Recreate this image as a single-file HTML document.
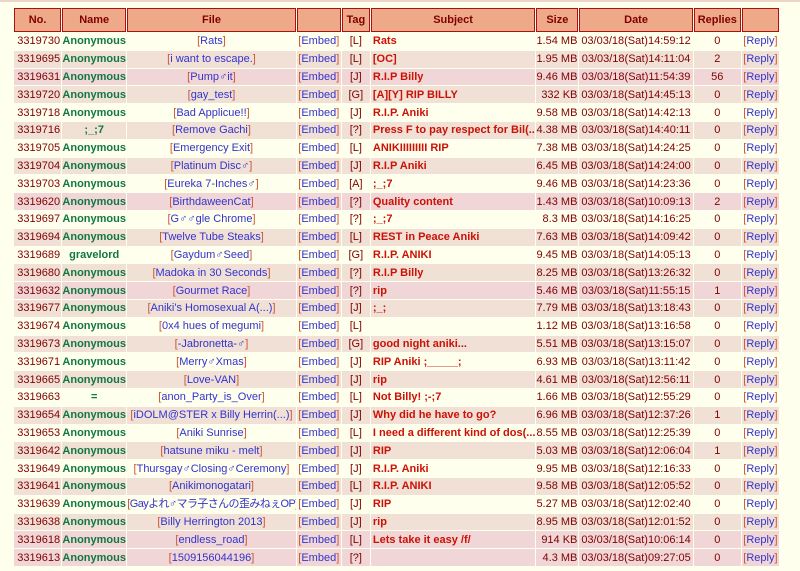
<!DOCTYPE html>
<html><head><meta charset="utf-8">
<style>
html,body{margin:0;padding:0;background:#FFFFEE;}
body{width:800px;height:571px;overflow:hidden;position:relative;font-family:"Liberation Sans","Noto Sans CJK JP",Arial,sans-serif;font-size:11px;}
.top{position:absolute;left:0;top:0;width:800px;height:2px;background:#EAD6C6;}
table{position:absolute;left:13px;top:7px;border-collapse:separate;border-spacing:1px;table-layout:fixed;width:767px;}
th{background:#EEAA88;border:1px solid #AA1111;color:#800000;font-weight:bold;height:22px;padding:0;font-size:11px;}
td{height:16.8px;padding:0;white-space:nowrap;overflow:hidden;color:#800000;line-height:16px;font-size:11px;}
tr.a td{background:#FFFFEE}
tr.b td{background:#F0E0D6}
tr.p td{background:#F0D6D6}
td.no{text-align:right;padding-right:1px}
td.nm{color:#117743;font-weight:bold;text-align:center}
td.f,td.e,td.t,td.r,td.rp{text-align:center}
td.s{color:#CC1105;font-weight:bold;text-align:left;padding-left:2px}
td.sz{text-align:right;padding-right:1px}
td.d{text-align:center}
a{color:#3333CC;text-decoration:none}
.br{color:#CC5533}
</style></head><body>
<div class="top"></div>
<table>
<colgroup><col style="width:47px"><col style="width:64px"><col style="width:168px"><col style="width:44px"><col style="width:28px"><col style="width:164px"><col style="width:42px"><col style="width:113px"><col style="width:47px"><col style="width:37px"></colgroup>
<tr><th>No.</th><th>Name</th><th>File</th><th></th><th>Tag</th><th>Subject</th><th>Size</th><th>Date</th><th>Replies</th><th></th></tr>
<tr class="a"><td class="no">3319730</td><td class="nm">Anonymous</td><td class="f"><span class="br">[</span><a>Rats</a><span class="br">]</span></td><td class="e"><span class="br">[</span><a>Embed</a><span class="br">]</span></td><td class="t">[L]</td><td class="s">Rats</td><td class="sz">1.54 MB</td><td class="d">03/03/18(Sat)14:59:12</td><td class="r">0</td><td class="rp"><span class="br">[</span><a>Reply</a><span class="br">]</span></td></tr>
<tr class="b"><td class="no">3319695</td><td class="nm">Anonymous</td><td class="f"><span class="br">[</span><a>i want to escape.</a><span class="br">]</span></td><td class="e"><span class="br">[</span><a>Embed</a><span class="br">]</span></td><td class="t">[L]</td><td class="s">[OC]</td><td class="sz">1.95 MB</td><td class="d">03/03/18(Sat)14:11:04</td><td class="r">2</td><td class="rp"><span class="br">[</span><a>Reply</a><span class="br">]</span></td></tr>
<tr class="p"><td class="no">3319631</td><td class="nm">Anonymous</td><td class="f"><span class="br">[</span><a>Pump♂it</a><span class="br">]</span></td><td class="e"><span class="br">[</span><a>Embed</a><span class="br">]</span></td><td class="t">[J]</td><td class="s">R.I.P Billy</td><td class="sz">9.46 MB</td><td class="d">03/03/18(Sat)11:54:39</td><td class="r">56</td><td class="rp"><span class="br">[</span><a>Reply</a><span class="br">]</span></td></tr>
<tr class="b"><td class="no">3319720</td><td class="nm">Anonymous</td><td class="f"><span class="br">[</span><a>gay_test</a><span class="br">]</span></td><td class="e"><span class="br">[</span><a>Embed</a><span class="br">]</span></td><td class="t">[G]</td><td class="s">[A][Y] RIP BILLY</td><td class="sz">332 KB</td><td class="d">03/03/18(Sat)14:45:13</td><td class="r">0</td><td class="rp"><span class="br">[</span><a>Reply</a><span class="br">]</span></td></tr>
<tr class="a"><td class="no">3319718</td><td class="nm">Anonymous</td><td class="f"><span class="br">[</span><a>Bad Applicue!!</a><span class="br">]</span></td><td class="e"><span class="br">[</span><a>Embed</a><span class="br">]</span></td><td class="t">[J]</td><td class="s">R.I.P. Aniki</td><td class="sz">9.58 MB</td><td class="d">03/03/18(Sat)14:42:13</td><td class="r">0</td><td class="rp"><span class="br">[</span><a>Reply</a><span class="br">]</span></td></tr>
<tr class="b"><td class="no">3319716</td><td class="nm">;_;7</td><td class="f"><span class="br">[</span><a>Remove Gachi</a><span class="br">]</span></td><td class="e"><span class="br">[</span><a>Embed</a><span class="br">]</span></td><td class="t">[?]</td><td class="s">Press F to pay respect for Bil(...)</td><td class="sz">4.38 MB</td><td class="d">03/03/18(Sat)14:40:11</td><td class="r">0</td><td class="rp"><span class="br">[</span><a>Reply</a><span class="br">]</span></td></tr>
<tr class="a"><td class="no">3319705</td><td class="nm">Anonymous</td><td class="f"><span class="br">[</span><a>Emergency Exit</a><span class="br">]</span></td><td class="e"><span class="br">[</span><a>Embed</a><span class="br">]</span></td><td class="t">[L]</td><td class="s">ANIKIIIIIIIII RIP</td><td class="sz">7.38 MB</td><td class="d">03/03/18(Sat)14:24:25</td><td class="r">0</td><td class="rp"><span class="br">[</span><a>Reply</a><span class="br">]</span></td></tr>
<tr class="b"><td class="no">3319704</td><td class="nm">Anonymous</td><td class="f"><span class="br">[</span><a>Platinum Disc♂</a><span class="br">]</span></td><td class="e"><span class="br">[</span><a>Embed</a><span class="br">]</span></td><td class="t">[J]</td><td class="s">R.I.P Aniki</td><td class="sz">6.45 MB</td><td class="d">03/03/18(Sat)14:24:00</td><td class="r">0</td><td class="rp"><span class="br">[</span><a>Reply</a><span class="br">]</span></td></tr>
<tr class="a"><td class="no">3319703</td><td class="nm">Anonymous</td><td class="f"><span class="br">[</span><a>Eureka 7-Inches♂</a><span class="br">]</span></td><td class="e"><span class="br">[</span><a>Embed</a><span class="br">]</span></td><td class="t">[A]</td><td class="s">;_;7</td><td class="sz">9.46 MB</td><td class="d">03/03/18(Sat)14:23:36</td><td class="r">0</td><td class="rp"><span class="br">[</span><a>Reply</a><span class="br">]</span></td></tr>
<tr class="p"><td class="no">3319620</td><td class="nm">Anonymous</td><td class="f"><span class="br">[</span><a>BirthdaweenCat</a><span class="br">]</span></td><td class="e"><span class="br">[</span><a>Embed</a><span class="br">]</span></td><td class="t">[?]</td><td class="s">Quality content</td><td class="sz">1.43 MB</td><td class="d">03/03/18(Sat)10:09:13</td><td class="r">2</td><td class="rp"><span class="br">[</span><a>Reply</a><span class="br">]</span></td></tr>
<tr class="a"><td class="no">3319697</td><td class="nm">Anonymous</td><td class="f"><span class="br">[</span><a>G♂♂gle Chrome</a><span class="br">]</span></td><td class="e"><span class="br">[</span><a>Embed</a><span class="br">]</span></td><td class="t">[?]</td><td class="s">;_;7</td><td class="sz">8.3 MB</td><td class="d">03/03/18(Sat)14:16:25</td><td class="r">0</td><td class="rp"><span class="br">[</span><a>Reply</a><span class="br">]</span></td></tr>
<tr class="b"><td class="no">3319694</td><td class="nm">Anonymous</td><td class="f"><span class="br">[</span><a>Twelve Tube Steaks</a><span class="br">]</span></td><td class="e"><span class="br">[</span><a>Embed</a><span class="br">]</span></td><td class="t">[L]</td><td class="s">REST in Peace Aniki</td><td class="sz">7.63 MB</td><td class="d">03/03/18(Sat)14:09:42</td><td class="r">0</td><td class="rp"><span class="br">[</span><a>Reply</a><span class="br">]</span></td></tr>
<tr class="a"><td class="no">3319689</td><td class="nm">gravelord</td><td class="f"><span class="br">[</span><a>Gaydum♂Seed</a><span class="br">]</span></td><td class="e"><span class="br">[</span><a>Embed</a><span class="br">]</span></td><td class="t">[G]</td><td class="s">R.I.P. ANIKI</td><td class="sz">9.45 MB</td><td class="d">03/03/18(Sat)14:05:13</td><td class="r">0</td><td class="rp"><span class="br">[</span><a>Reply</a><span class="br">]</span></td></tr>
<tr class="b"><td class="no">3319680</td><td class="nm">Anonymous</td><td class="f"><span class="br">[</span><a>Madoka in 30 Seconds</a><span class="br">]</span></td><td class="e"><span class="br">[</span><a>Embed</a><span class="br">]</span></td><td class="t">[?]</td><td class="s">R.I.P Billy</td><td class="sz">8.25 MB</td><td class="d">03/03/18(Sat)13:26:32</td><td class="r">0</td><td class="rp"><span class="br">[</span><a>Reply</a><span class="br">]</span></td></tr>
<tr class="p"><td class="no">3319632</td><td class="nm">Anonymous</td><td class="f"><span class="br">[</span><a>Gourmet Race</a><span class="br">]</span></td><td class="e"><span class="br">[</span><a>Embed</a><span class="br">]</span></td><td class="t">[?]</td><td class="s">rip</td><td class="sz">5.46 MB</td><td class="d">03/03/18(Sat)11:55:15</td><td class="r">1</td><td class="rp"><span class="br">[</span><a>Reply</a><span class="br">]</span></td></tr>
<tr class="b"><td class="no">3319677</td><td class="nm">Anonymous</td><td class="f"><span class="br">[</span><a>Aniki's Homosexual A(...)</a><span class="br">]</span></td><td class="e"><span class="br">[</span><a>Embed</a><span class="br">]</span></td><td class="t">[J]</td><td class="s">;_;</td><td class="sz">7.79 MB</td><td class="d">03/03/18(Sat)13:18:43</td><td class="r">0</td><td class="rp"><span class="br">[</span><a>Reply</a><span class="br">]</span></td></tr>
<tr class="a"><td class="no">3319674</td><td class="nm">Anonymous</td><td class="f"><span class="br">[</span><a>0x4 hues of megumi</a><span class="br">]</span></td><td class="e"><span class="br">[</span><a>Embed</a><span class="br">]</span></td><td class="t">[L]</td><td class="s"></td><td class="sz">1.12 MB</td><td class="d">03/03/18(Sat)13:16:58</td><td class="r">0</td><td class="rp"><span class="br">[</span><a>Reply</a><span class="br">]</span></td></tr>
<tr class="b"><td class="no">3319673</td><td class="nm">Anonymous</td><td class="f"><span class="br">[</span><a>-Jabronetta-♂</a><span class="br">]</span></td><td class="e"><span class="br">[</span><a>Embed</a><span class="br">]</span></td><td class="t">[G]</td><td class="s">good night aniki...</td><td class="sz">5.51 MB</td><td class="d">03/03/18(Sat)13:15:07</td><td class="r">0</td><td class="rp"><span class="br">[</span><a>Reply</a><span class="br">]</span></td></tr>
<tr class="a"><td class="no">3319671</td><td class="nm">Anonymous</td><td class="f"><span class="br">[</span><a>Merry♂Xmas</a><span class="br">]</span></td><td class="e"><span class="br">[</span><a>Embed</a><span class="br">]</span></td><td class="t">[J]</td><td class="s">RIP Aniki ;_____;</td><td class="sz">6.93 MB</td><td class="d">03/03/18(Sat)13:11:42</td><td class="r">0</td><td class="rp"><span class="br">[</span><a>Reply</a><span class="br">]</span></td></tr>
<tr class="b"><td class="no">3319665</td><td class="nm">Anonymous</td><td class="f"><span class="br">[</span><a>Love-VAN</a><span class="br">]</span></td><td class="e"><span class="br">[</span><a>Embed</a><span class="br">]</span></td><td class="t">[J]</td><td class="s">rip</td><td class="sz">4.61 MB</td><td class="d">03/03/18(Sat)12:56:11</td><td class="r">0</td><td class="rp"><span class="br">[</span><a>Reply</a><span class="br">]</span></td></tr>
<tr class="a"><td class="no">3319663</td><td class="nm">=</td><td class="f"><span class="br">[</span><a>anon_Party_is_Over</a><span class="br">]</span></td><td class="e"><span class="br">[</span><a>Embed</a><span class="br">]</span></td><td class="t">[L]</td><td class="s">Not Billy! ;-;7</td><td class="sz">1.66 MB</td><td class="d">03/03/18(Sat)12:55:29</td><td class="r">0</td><td class="rp"><span class="br">[</span><a>Reply</a><span class="br">]</span></td></tr>
<tr class="b"><td class="no">3319654</td><td class="nm">Anonymous</td><td class="f"><span class="br">[</span><a>iDOLM@STER x Billy Herrin(...)</a><span class="br">]</span></td><td class="e"><span class="br">[</span><a>Embed</a><span class="br">]</span></td><td class="t">[J]</td><td class="s">Why did he have to go?</td><td class="sz">6.96 MB</td><td class="d">03/03/18(Sat)12:37:26</td><td class="r">1</td><td class="rp"><span class="br">[</span><a>Reply</a><span class="br">]</span></td></tr>
<tr class="a"><td class="no">3319653</td><td class="nm">Anonymous</td><td class="f"><span class="br">[</span><a>Aniki Sunrise</a><span class="br">]</span></td><td class="e"><span class="br">[</span><a>Embed</a><span class="br">]</span></td><td class="t">[L]</td><td class="s">I need a different kind of dos(...)</td><td class="sz">8.55 MB</td><td class="d">03/03/18(Sat)12:25:39</td><td class="r">0</td><td class="rp"><span class="br">[</span><a>Reply</a><span class="br">]</span></td></tr>
<tr class="b"><td class="no">3319642</td><td class="nm">Anonymous</td><td class="f"><span class="br">[</span><a>hatsune miku - melt</a><span class="br">]</span></td><td class="e"><span class="br">[</span><a>Embed</a><span class="br">]</span></td><td class="t">[J]</td><td class="s">RIP</td><td class="sz">5.03 MB</td><td class="d">03/03/18(Sat)12:06:04</td><td class="r">1</td><td class="rp"><span class="br">[</span><a>Reply</a><span class="br">]</span></td></tr>
<tr class="a"><td class="no">3319649</td><td class="nm">Anonymous</td><td class="f"><span class="br">[</span><a>Thursgay♂Closing♂Ceremony</a><span class="br">]</span></td><td class="e"><span class="br">[</span><a>Embed</a><span class="br">]</span></td><td class="t">[J]</td><td class="s">R.I.P. Aniki</td><td class="sz">9.95 MB</td><td class="d">03/03/18(Sat)12:16:33</td><td class="r">0</td><td class="rp"><span class="br">[</span><a>Reply</a><span class="br">]</span></td></tr>
<tr class="b"><td class="no">3319641</td><td class="nm">Anonymous</td><td class="f"><span class="br">[</span><a>Anikimonogatari</a><span class="br">]</span></td><td class="e"><span class="br">[</span><a>Embed</a><span class="br">]</span></td><td class="t">[L]</td><td class="s">R.I.P. ANIKI</td><td class="sz">9.58 MB</td><td class="d">03/03/18(Sat)12:05:52</td><td class="r">0</td><td class="rp"><span class="br">[</span><a>Reply</a><span class="br">]</span></td></tr>
<tr class="a"><td class="no">3319639</td><td class="nm">Anonymous</td><td class="f" style="letter-spacing:-0.6px"><span class="br">[</span><a>Gayよれ♂マラ子さんの歪みねぇOP</a><span class="br">]</span></td><td class="e"><span class="br">[</span><a>Embed</a><span class="br">]</span></td><td class="t">[J]</td><td class="s">RIP</td><td class="sz">5.27 MB</td><td class="d">03/03/18(Sat)12:02:40</td><td class="r">0</td><td class="rp"><span class="br">[</span><a>Reply</a><span class="br">]</span></td></tr>
<tr class="b"><td class="no">3319638</td><td class="nm">Anonymous</td><td class="f"><span class="br">[</span><a>Billy Herrington 2013</a><span class="br">]</span></td><td class="e"><span class="br">[</span><a>Embed</a><span class="br">]</span></td><td class="t">[J]</td><td class="s">rip</td><td class="sz">8.95 MB</td><td class="d">03/03/18(Sat)12:01:52</td><td class="r">0</td><td class="rp"><span class="br">[</span><a>Reply</a><span class="br">]</span></td></tr>
<tr class="p"><td class="no">3319618</td><td class="nm">Anonymous</td><td class="f"><span class="br">[</span><a>endless_road</a><span class="br">]</span></td><td class="e"><span class="br">[</span><a>Embed</a><span class="br">]</span></td><td class="t">[L]</td><td class="s">Lets take it easy /f/</td><td class="sz">914 KB</td><td class="d">03/03/18(Sat)10:06:14</td><td class="r">0</td><td class="rp"><span class="br">[</span><a>Reply</a><span class="br">]</span></td></tr>
<tr class="p"><td class="no">3319613</td><td class="nm">Anonymous</td><td class="f"><span class="br">[</span><a>1509156044196</a><span class="br">]</span></td><td class="e"><span class="br">[</span><a>Embed</a><span class="br">]</span></td><td class="t">[?]</td><td class="s"></td><td class="sz">4.3 MB</td><td class="d">03/03/18(Sat)09:27:05</td><td class="r">0</td><td class="rp"><span class="br">[</span><a>Reply</a><span class="br">]</span></td></tr>
</table>
</body></html>
